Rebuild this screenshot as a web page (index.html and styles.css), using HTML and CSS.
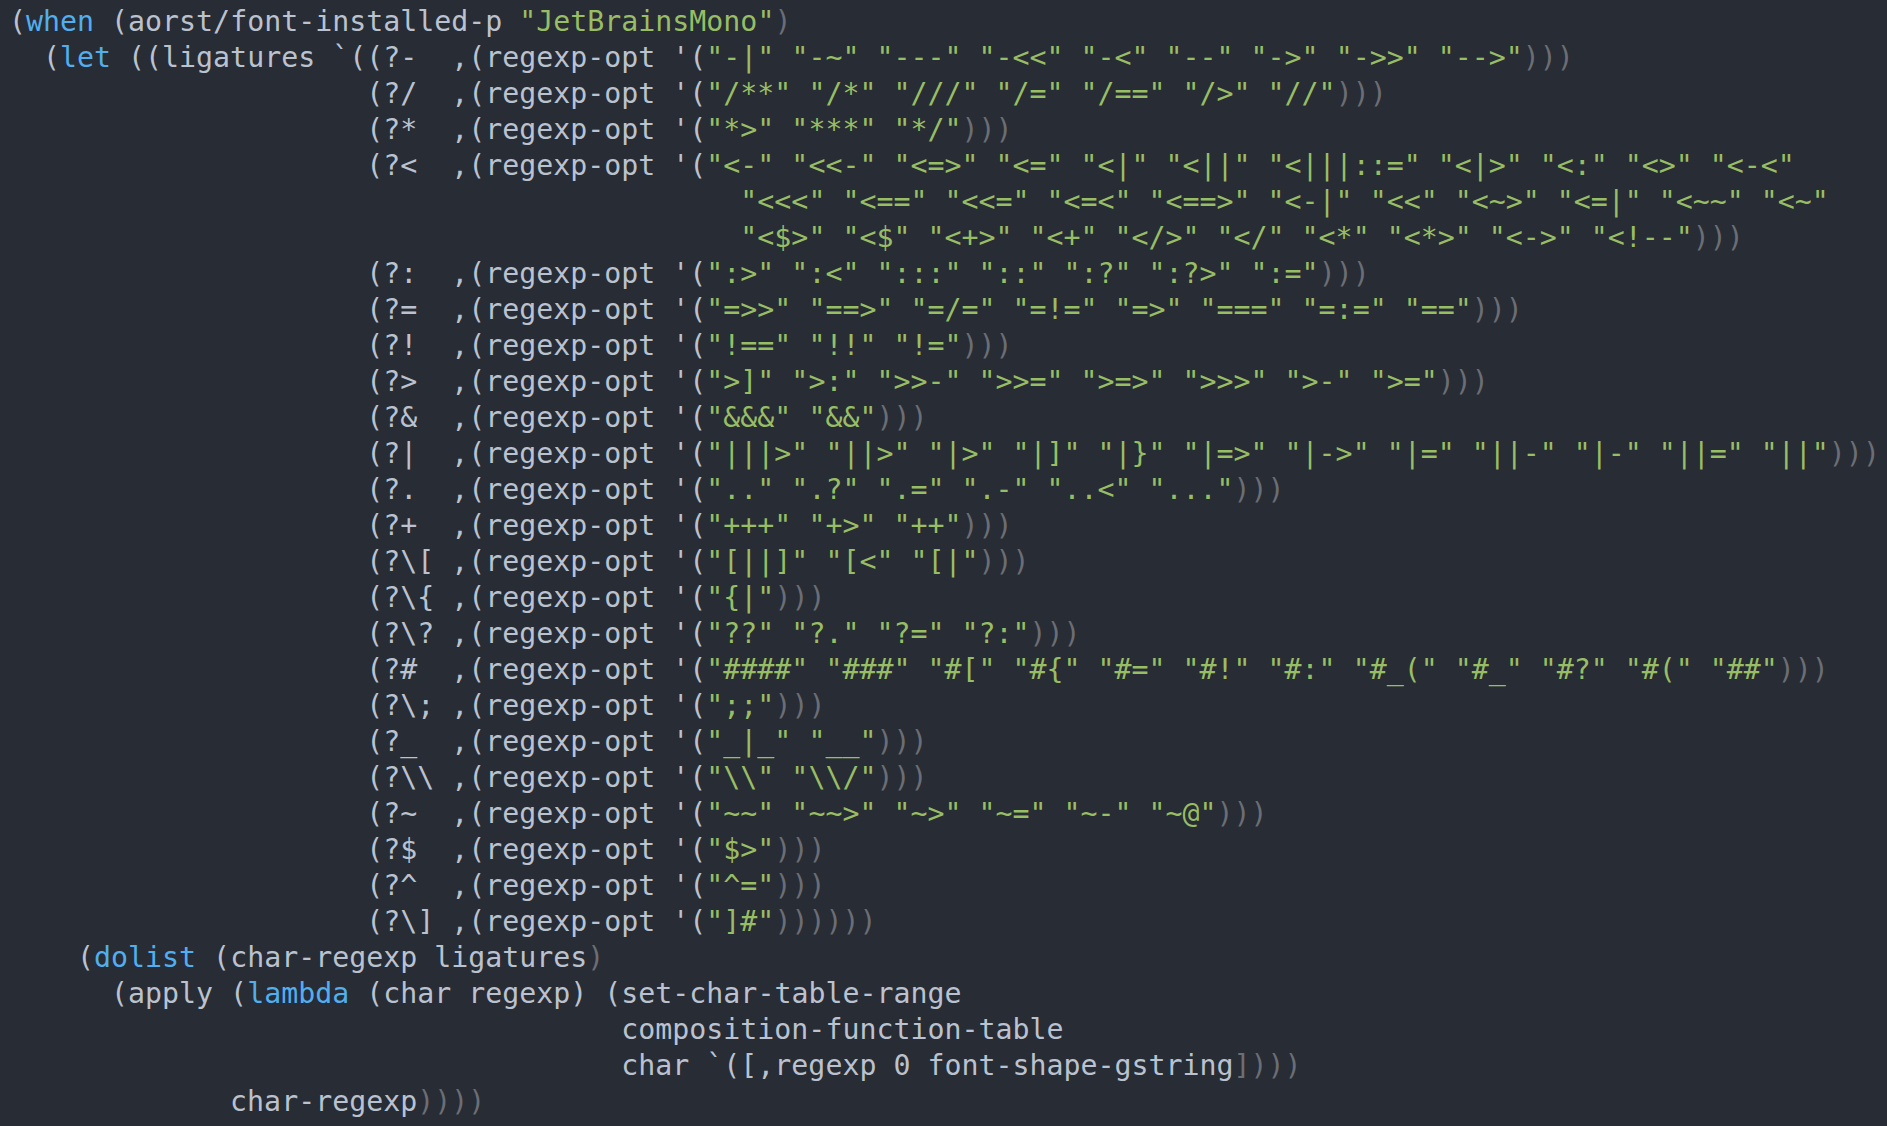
FILE: index.html
```html
<!DOCTYPE html>
<html lang="en">
<head>
<meta charset="utf-8">
<title>ligatures.el</title>
<link rel="stylesheet" href="styles.css">
</head>
<body>
<pre class="code">(<span class="kw">when</span> (aorst/font-installed-p <span class="str">"JetBrainsMono"</span><span class="dim">)</span>
  (<span class="kw">let</span> ((ligatures `((?-  ,(regexp-opt '(<span class="str">"-|" "-~" "---" "-&lt;&lt;" "-&lt;" "--" "-&gt;" "-&gt;&gt;" "--&gt;"</span><span class="dim">)))</span>
                     (?/  ,(regexp-opt '(<span class="str">"/**" "/*" "///" "/=" "/==" "/&gt;" "//"</span><span class="dim">)))</span>
                     (?*  ,(regexp-opt '(<span class="str">"*&gt;" "***" "*/"</span><span class="dim">)))</span>
                     (?&lt;  ,(regexp-opt '(<span class="str">"&lt;-" "&lt;&lt;-" "&lt;=&gt;" "&lt;=" "&lt;|" "&lt;||" "&lt;|||::=" "&lt;|&gt;" "&lt;:" "&lt;&gt;" "&lt;-&lt;"</span>
                                           <span class="str">"&lt;&lt;&lt;" "&lt;==" "&lt;&lt;=" "&lt;=&lt;" "&lt;==&gt;" "&lt;-|" "&lt;&lt;" "&lt;~&gt;" "&lt;=|" "&lt;~~" "&lt;~"</span>
                                           <span class="str">"&lt;$&gt;" "&lt;$" "&lt;+&gt;" "&lt;+" "&lt;/&gt;" "&lt;/" "&lt;*" "&lt;*&gt;" "&lt;-&gt;" "&lt;!--"</span><span class="dim">)))</span>
                     (?:  ,(regexp-opt '(<span class="str">":&gt;" ":&lt;" ":::" "::" ":?" ":?&gt;" ":="</span><span class="dim">)))</span>
                     (?=  ,(regexp-opt '(<span class="str">"=&gt;&gt;" "==&gt;" "=/=" "=!=" "=&gt;" "===" "=:=" "=="</span><span class="dim">)))</span>
                     (?!  ,(regexp-opt '(<span class="str">"!==" "!!" "!="</span><span class="dim">)))</span>
                     (?&gt;  ,(regexp-opt '(<span class="str">"&gt;]" "&gt;:" "&gt;&gt;-" "&gt;&gt;=" "&gt;=&gt;" "&gt;&gt;&gt;" "&gt;-" "&gt;="</span><span class="dim">)))</span>
                     (?&amp;  ,(regexp-opt '(<span class="str">"&amp;&amp;&amp;" "&amp;&amp;"</span><span class="dim">)))</span>
                     (?|  ,(regexp-opt '(<span class="str">"|||&gt;" "||&gt;" "|&gt;" "|]" "|}" "|=&gt;" "|-&gt;" "|=" "||-" "|-" "||=" "||"</span><span class="dim">)))</span>
                     (?.  ,(regexp-opt '(<span class="str">".." ".?" ".=" ".-" "..&lt;" "..."</span><span class="dim">)))</span>
                     (?+  ,(regexp-opt '(<span class="str">"+++" "+&gt;" "++"</span><span class="dim">)))</span>
                     (?\[ ,(regexp-opt '(<span class="str">"[||]" "[&lt;" "[|"</span><span class="dim">)))</span>
                     (?\{ ,(regexp-opt '(<span class="str">"{|"</span><span class="dim">)))</span>
                     (?\? ,(regexp-opt '(<span class="str">"??" "?." "?=" "?:"</span><span class="dim">)))</span>
                     (?#  ,(regexp-opt '(<span class="str">"####" "###" "#[" "#{" "#=" "#!" "#:" "#_(" "#_" "#?" "#(" "##"</span><span class="dim">)))</span>
                     (?\; ,(regexp-opt '(<span class="str">";;"</span><span class="dim">)))</span>
                     (?_  ,(regexp-opt '(<span class="str">"_|_" "__"</span><span class="dim">)))</span>
                     (?\\ ,(regexp-opt '(<span class="str">"\\" "\\/"</span><span class="dim">)))</span>
                     (?~  ,(regexp-opt '(<span class="str">"~~" "~~&gt;" "~&gt;" "~=" "~-" "~@"</span><span class="dim">)))</span>
                     (?$  ,(regexp-opt '(<span class="str">"$&gt;"</span><span class="dim">)))</span>
                     (?^  ,(regexp-opt '(<span class="str">"^="</span><span class="dim">)))</span>
                     (?\] ,(regexp-opt '(<span class="str">"]#"</span><span class="dim">))))))</span>
    (<span class="kw">dolist</span> (char-regexp ligatures<span class="dim">)</span>
      (apply (<span class="kw">lambda</span> (char regexp) (set-char-table-range
                                    composition-function-table
                                    char `([,regexp 0 font-shape-gstring<span class="dim">])))</span>
             char-regexp<span class="dim">))))</span></pre>
</body>
</html>
```

FILE: styles.css
```css
html, body {
  margin: 0;
  padding: 0;
  background: #282c34;
  min-height: 100vh;
}

.code {
  margin: 0;
  padding: 4px 0 0 9px;
  font-family: "DejaVu Sans Mono", "Liberation Mono", monospace;
  font-size: 28.25px;
  line-height: 36px;
  color: #bbc2cf;
  white-space: pre;
}

.kw {
  color: #51afef;
}

.str {
  color: #98be65;
}

.dim {
  color: #6b6e74;
}
```
